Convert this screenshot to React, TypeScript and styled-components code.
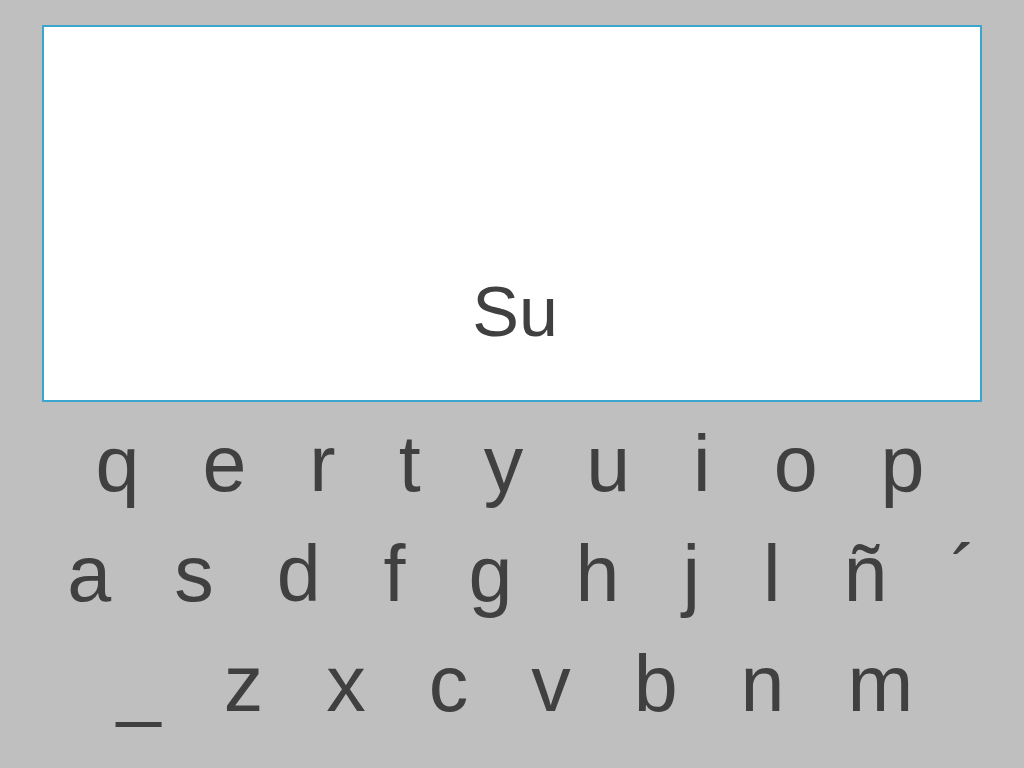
import React from 'react';
import styled, {createGlobalStyle} from "styled-components";

const GlobalStyle = createGlobalStyle`
  html, body {
    margin: 0;
    padding: 0;
    background: #bfbfbf;
  }
  body {
    font-family: "Liberation Sans", Arial, sans-serif;
  }
`

const Page = styled.div`
  width: 1024px;
  height: 768px;
  padding: 25px 42px 0;
  box-sizing: border-box;
  display: flex;
  flex-direction: column;
  gap: 7px;
  overflow: hidden;
`

const Display = styled.div`
  height: 377px;
  box-sizing: border-box;
  background: #fff;
  border: 2px solid #3ba5cd;
  display: flex;
  flex-direction: column;
  justify-content: flex-end;
  align-items: center;
  padding: 0 0 53px 6px;
`

const Typed = styled.div`
  font-size: 70px;
  line-height: 1;
  color: #404040;
`

const Keyboard = styled.div`
  display: flex;
  flex-direction: column;
  margin: 0 -42px;
`

const Row = styled.div<{ $nudge: number }>`
  display: flex;
  justify-content: center;
  gap: 63px;
  padding-left: ${p => Math.max(0, p.$nudge) * 2}px;
  padding-right: ${p => Math.max(0, -p.$nudge) * 2}px;
`

const Key = styled.span`
  font-size: 79px;
  line-height: 110px;
  color: #404040;
  cursor: pointer;
  user-select: none;
`

const rows: { keys: string[], nudge: number }[] = [
    {keys: ['q', 'e', 'r', 't', 'y', 'u', 'i', 'o', 'p'], nudge: -2},
    {keys: ['a', 's', 'd', 'f', 'g', 'h', 'j', 'l', 'ñ', '´'], nudge: 10},
    {keys: ['_', 'z', 'x', 'c', 'v', 'b', 'n', 'm'], nudge: 3},
]

export default function App() {
    return (
        <>
            <GlobalStyle/>
            <Page>
                <Display>
                    <Typed>Su</Typed>
                </Display>
                <Keyboard>
                    {rows.map((row, i) => (
                        <Row key={i} $nudge={row.nudge}>
                            {row.keys.map(k => <Key key={k}>{k}</Key>)}
                        </Row>
                    ))}
                </Keyboard>
            </Page>
        </>
    );
}
